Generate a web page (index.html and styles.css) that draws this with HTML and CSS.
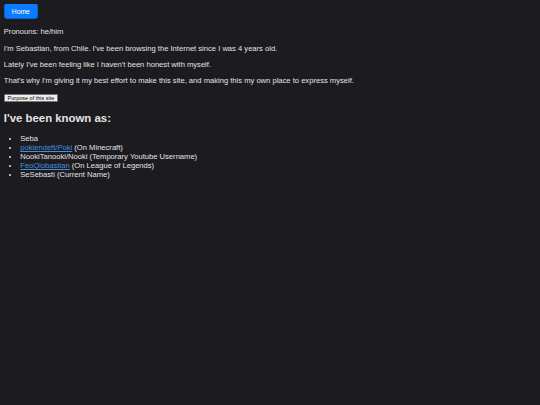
FILE: index.html
```html
<!DOCTYPE html>
<html>
<head>
<meta charset="utf-8">
<link rel="stylesheet" href="styles.css">
</head>
<body>
<nav class="nav"><button class="home">Home</button></nav>
<main class="content">
<p>Pronouns: he/him</p>
<p>I'm Sebastian, from Chile. I've been browsing the Internet since I was 4 years old.</p>
<p>Lately I've been feeling like I haven't been honest with myself.</p>
<p>That's why I'm giving it my best effort to make this site, and making this my own place to express myself.</p>
<button class="purpose">Purpose of this site</button>
<h2 class="title">I've been known as:</h2>
<ul class="names">
<li>Seba</li>
<li><a href="#">pokiendeft/Poki</a> (On Minecraft)</li>
<li>NookiTanooki/Nooki (Temporary Youtube Username)</li>
<li><a href="#">FeoQlobastian</a> (On League of Legends)</li>
<li>SeSebasti (Current Name)</li>
</ul>
</main>
</body>
</html>
```
FILE: styles.css
```css
html, body {
  background: #1c1b20;
}
body {
  margin: 3.8px;
  color: #e4e4e4;
  font-family: "Liberation Sans", Arial, sans-serif;
  font-size: 7.6px;
  line-height: 8.74px;
}
.nav {
  margin-top: -1px;
  height: 18px;
}
.home {
  display: block;
  background: #0a7cff;
  color: #fff;
  border: 1px solid #0962cc;
  border-radius: 3px;
  font-family: "Liberation Sans", Arial, sans-serif;
  font-size: 6.8px;
  width: 34px;
  height: 16.5px;
  padding: 0;
}
.content p {
  margin: 7.6px 0;
}
.purpose {
  display: block;
  font-family: "Liberation Sans", Arial, sans-serif;
  font-size: 5.5px;
  background: #efefef;
  color: #000;
  border: 1px solid #767676;
  border-radius: 1px;
  padding: 0 2.8px;
  height: 8.5px;
  line-height: 6.5px;
}
.title {
  font-size: 11.4px;
  line-height: 13px;
  margin: 9.5px 0 9.5px;
}
.names {
  margin: 7.6px 0;
  padding-left: 16.5px;
  line-height: 9px;
}
.names a {
  color: #4a8ede;
}
```
